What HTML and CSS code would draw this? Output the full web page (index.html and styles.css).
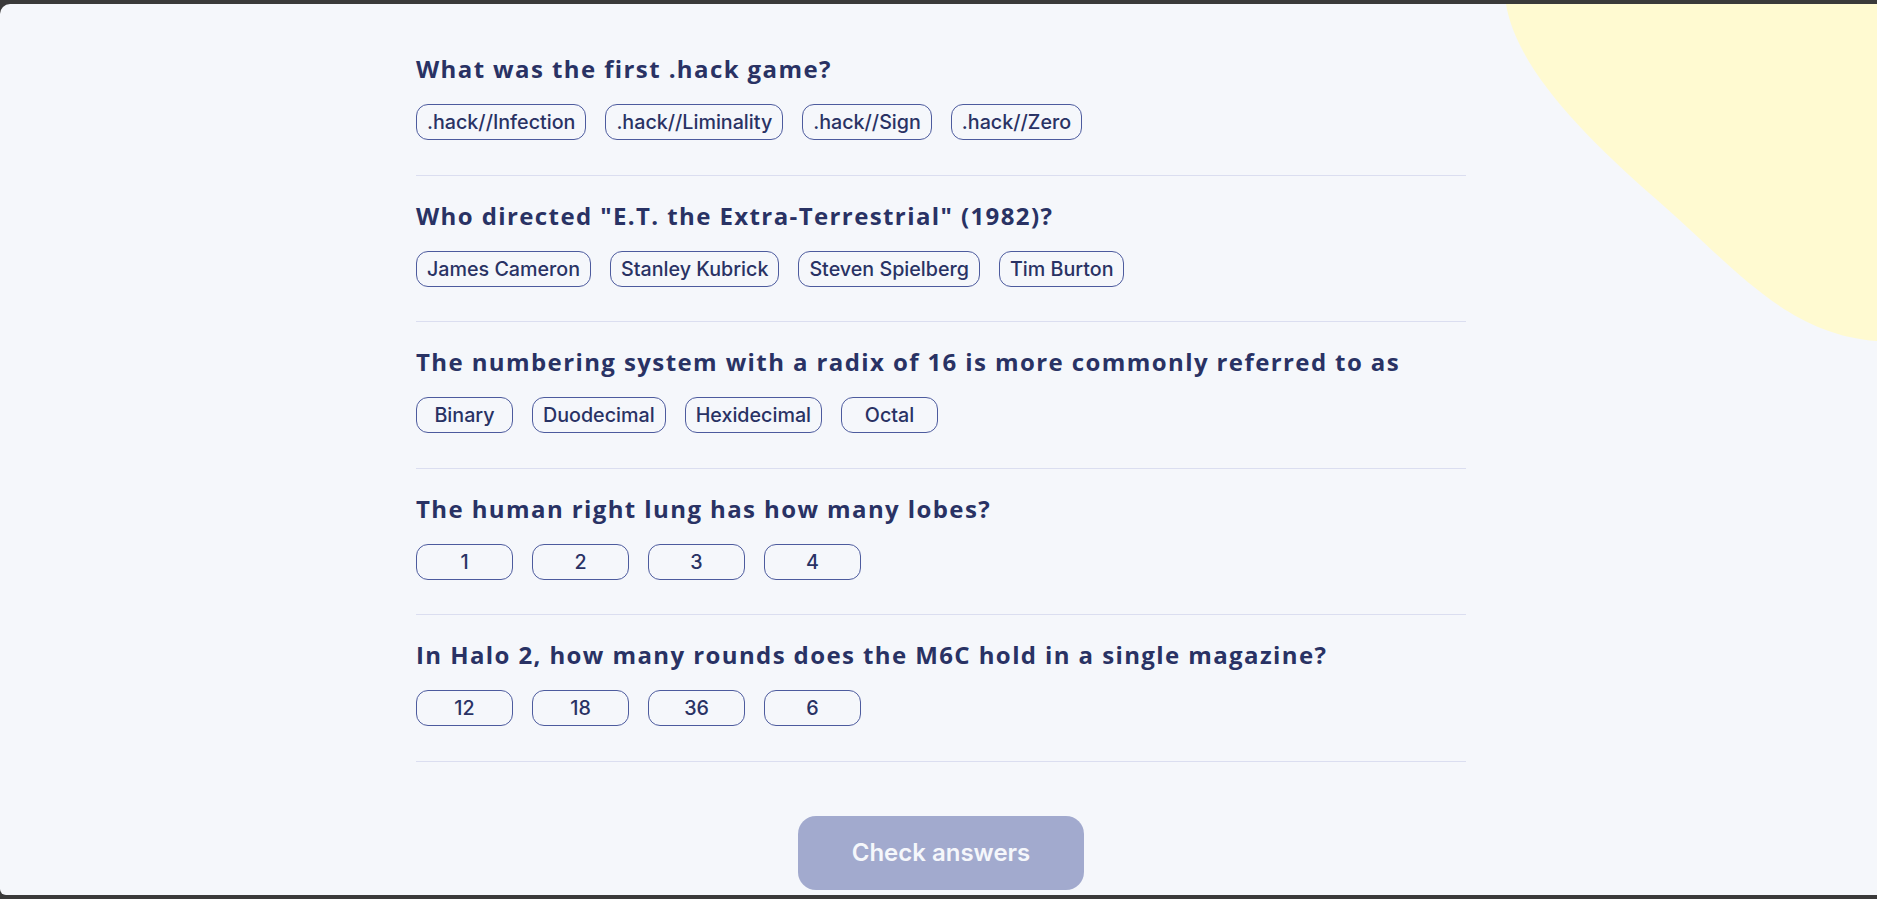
FILE: index.html
```html
<!DOCTYPE html>
<html lang="en">
<head>
<meta charset="utf-8">
<title>Quizzical</title>
<link rel="stylesheet" href="styles.css">
</head>
<body>
<main class="page">
  <svg class="blob" width="371" height="337" viewBox="0 0 371 337" aria-hidden="true">
    <path d="M0 0 C10 60 70 125 150 195 S280 330 371 337 L371 0 Z" fill="#FFFAD1"/>
  </svg>
  <div class="quiz">
    <section class="question">
      <h2 class="question-title">What was the first .hack game?</h2>
      <div class="answers">
        <button class="answer">.hack//Infection</button>
        <button class="answer">.hack//Liminality</button>
        <button class="answer">.hack//Sign</button>
        <button class="answer">.hack//Zero</button>
      </div>
    </section>
    <section class="question">
      <h2 class="question-title">Who directed &quot;E.T. the Extra-Terrestrial&quot; (1982)?</h2>
      <div class="answers">
        <button class="answer">James Cameron</button>
        <button class="answer">Stanley Kubrick</button>
        <button class="answer">Steven Spielberg</button>
        <button class="answer">Tim Burton</button>
      </div>
    </section>
    <section class="question">
      <h2 class="question-title">The numbering system with a radix of 16 is more commonly referred to as</h2>
      <div class="answers">
        <button class="answer">Binary</button>
        <button class="answer">Duodecimal</button>
        <button class="answer">Hexidecimal</button>
        <button class="answer">Octal</button>
      </div>
    </section>
    <section class="question">
      <h2 class="question-title">The human right lung has how many lobes?</h2>
      <div class="answers">
        <button class="answer">1</button>
        <button class="answer">2</button>
        <button class="answer">3</button>
        <button class="answer">4</button>
      </div>
    </section>
    <section class="question">
      <h2 class="question-title">In Halo 2, how many rounds does the M6C hold in a single magazine?</h2>
      <div class="answers">
        <button class="answer">12</button>
        <button class="answer">18</button>
        <button class="answer">36</button>
        <button class="answer">6</button>
      </div>
    </section>
    <div class="actions">
      <button class="check-btn">Check answers</button>
    </div>
  </div>
</main>
</body>
</html>
```

FILE: styles.css
```css
html, body {
  margin: 0;
  padding: 0;
}

body {
  background: #3a3a3a;
  padding: 4px 0;
  overflow: hidden;
}

.page {
  position: relative;
  height: 891px;
  background: #F5F7FB;
  border-radius: 10px 0 0 6px;
  overflow: hidden;
  padding: 25px 0 0 5px;
  box-sizing: border-box;
}

.blob {
  position: absolute;
  top: 0;
  right: 0;
  display: block;
}

.quiz {
  position: relative;
  width: 1050px;
  margin: 0 auto;
}

.question {
  padding: 25px 0 34.5px;
  border-bottom: 1px solid #DBDEF0;
}

.question-title {
  margin: 0 0 21px;
  font-family: "Open Sans", sans-serif;
  font-weight: 700;
  font-size: 24px;
  line-height: 29px;
  letter-spacing: 1.4px;
  color: #293264;
}

.answers {
  display: flex;
  gap: 19px;
}

.answer {
  box-sizing: border-box;
  min-width: 97px;
  height: 36px;
  padding: 5px 10px;
  border: 1px solid #4D5B9E;
  border-radius: 12px;
  background: transparent;
  font-family: Inter, sans-serif;
  font-weight: 500;
  font-size: 19.7px;
  line-height: 24px;
  color: #293264;
  text-align: center;
}

.actions {
  display: flex;
  justify-content: center;
  padding-top: 54px;
}

.check-btn {
  box-sizing: border-box;
  height: 74px;
  padding: 0 54px;
  border: none;
  border-radius: 18px;
  background: #A2AACE;
  font-family: Inter, sans-serif;
  font-weight: 600;
  font-size: 24px;
  line-height: 30px;
  color: #F5F7FB;
}
```
